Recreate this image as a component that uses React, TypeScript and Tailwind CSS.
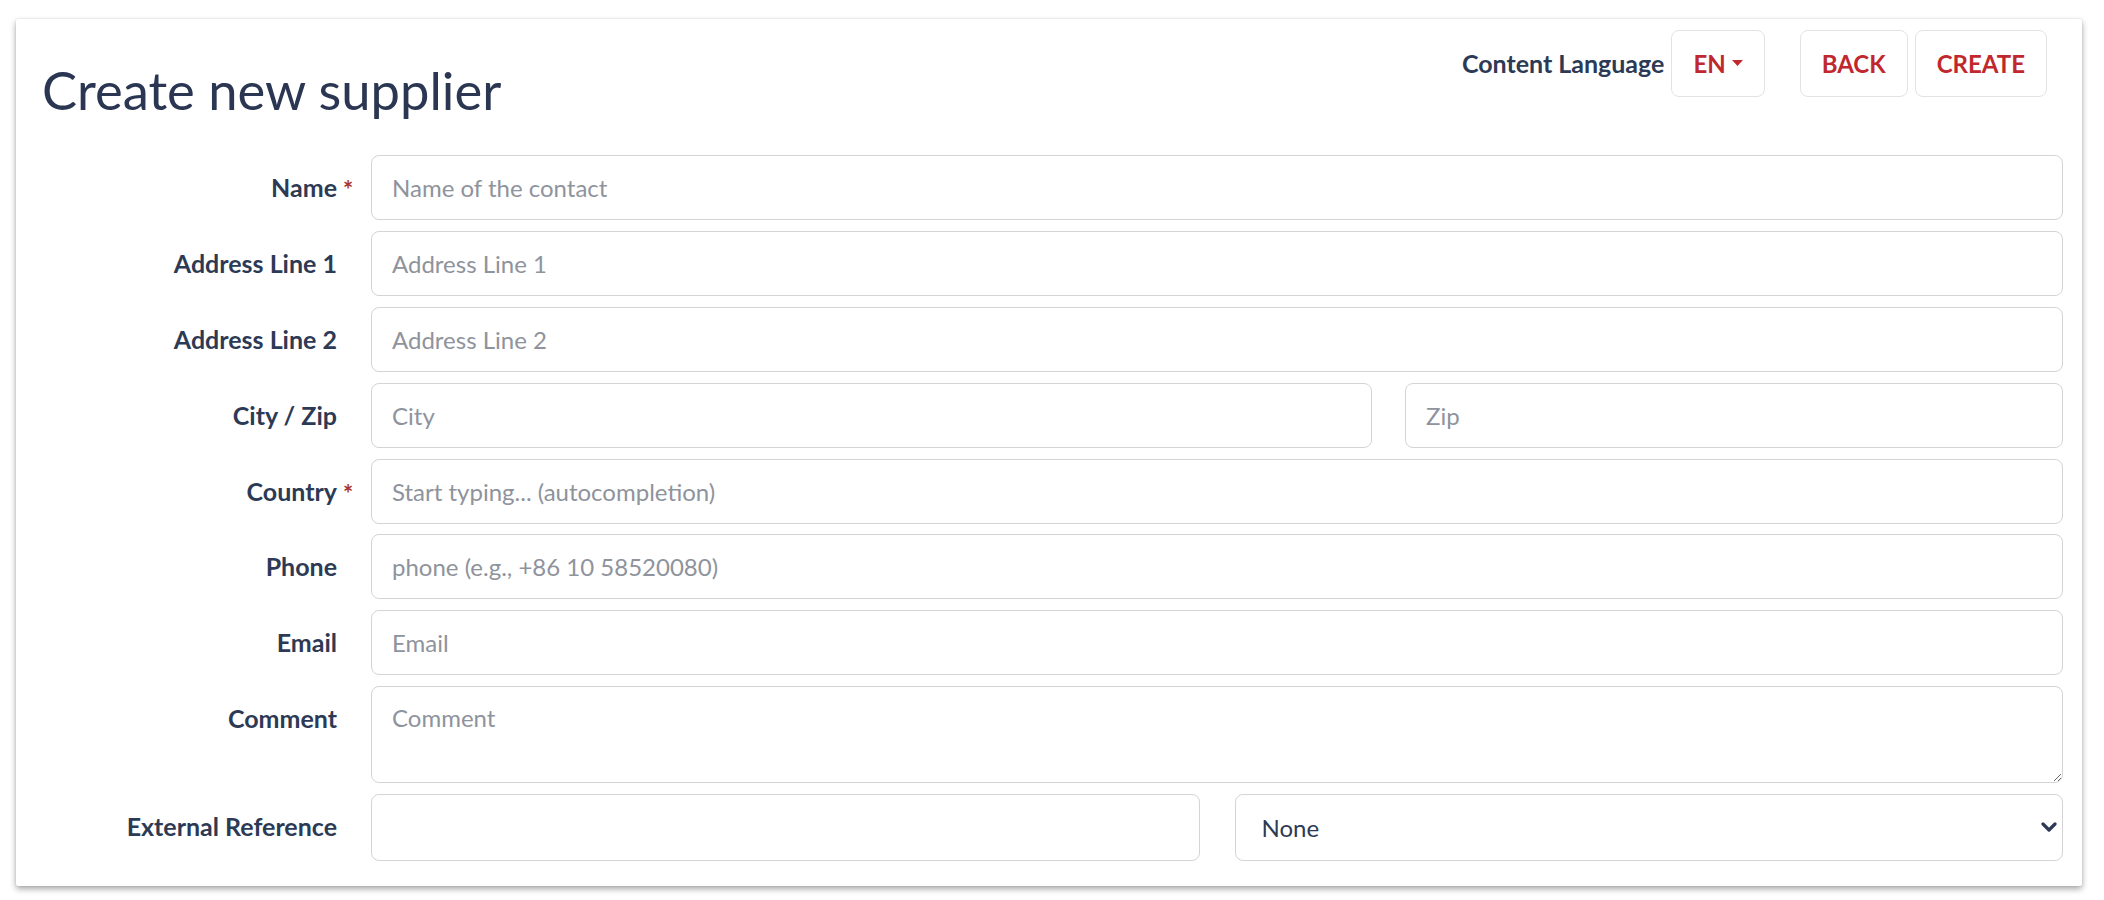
import React from "react";

function Row({
  label,
  required,
  children,
}: {
  label: string;
  required?: boolean;
  children: React.ReactNode;
}) {
  return (
    <div className="flex items-start">
      <div className="w-[355px] shrink-0 h-[65px] flex items-center justify-end pr-[34px]">
        <span className="relative text-[25px] font-bold text-[#2d3a55] leading-none">
          {label}
          {required && (
            <span className="absolute left-full top-[3px] ml-[6px] text-[24px] font-bold text-[#a8332e]">*</span>
          )}
        </span>
      </div>
      <div className="flex-1 min-w-0">{children}</div>
    </div>
  );
}

const inputCls =
  "block w-full h-[65px] rounded-[8px] border border-[#d4d4d6] bg-white px-[20px] text-[24px] text-[#2d3a55] placeholder:text-[#8e939c] outline-none";

function Input({ placeholder, tall }: { placeholder?: string; tall?: boolean }) {
  return (
    <input
      className={tall ? inputCls + " !h-[67px]" : inputCls}
      placeholder={placeholder}
    />
  );
}

export default function App() {
  return (
    <div className="min-h-[900px] bg-white font-['Lato','Noto_Sans',sans-serif] pt-[19px]">
      <div className="ml-[16px] mr-[22px] bg-white rounded-[2px] shadow-[0_3px_6px_rgba(0,0,0,0.35),0_0_2px_rgba(0,0,0,0.12)] pb-[25px] pr-[19px]">
        <div className="flex items-start justify-between">
          <h1 className="pl-[26px] pt-[39px] text-[52.5px] leading-[1.2] font-normal text-[#2b3752]">
            Create new supplier
          </h1>
          <div className="flex items-center pt-[11px] pr-[16px]">
            <span className="text-[25px] font-bold text-[#2d3a55] mr-[7px]">Content Language</span>
            <button className="h-[67px] px-[21px] rounded-[8px] border border-[#e3e3e5] bg-white flex items-center gap-[6px] text-[24px] font-bold text-[#c0282d]">
              EN
              <svg width="11" height="7" viewBox="0 0 11 7">
                <path d="M0 0 L11 0 L5.5 6 Z" fill="#c0282d" />
              </svg>
            </button>
            <button className="ml-[35px] h-[67px] px-[21px] rounded-[8px] border border-[#e3e3e5] bg-white text-[24px] font-bold text-[#c0282d]">
              BACK
            </button>
            <button className="ml-[7px] h-[67px] px-[21px] rounded-[8px] border border-[#e3e3e5] bg-white text-[24px] font-bold text-[#c0282d]">
              CREATE
            </button>
          </div>
        </div>

        <div className="mt-[34px] flex flex-col gap-[10.9px]">
          <Row label="Name" required>
            <Input placeholder="Name of the contact" />
          </Row>
          <Row label="Address Line 1">
            <Input placeholder="Address Line 1" />
          </Row>
          <Row label="Address Line 2">
            <Input placeholder="Address Line 2" />
          </Row>
          <Row label="City / Zip">
            <div className="grid grid-cols-[1001px_1fr] gap-[33px]">
              <Input placeholder="City" />
              <Input placeholder="Zip" />
            </div>
          </Row>
          <Row label="Country" required>
            <Input placeholder="Start typing... (autocompletion)" />
          </Row>
          <Row label="Phone">
            <Input placeholder="phone (e.g., +86 10 58520080)" />
          </Row>
          <Row label="Email">
            <Input placeholder="Email" />
          </Row>
          <Row label="Comment">
            <textarea
              className="block w-full h-[97px] rounded-[8px] border border-[#d4d4d6] bg-white px-[20px] py-[14px] text-[24px] leading-[1.4] text-[#2d3a55] placeholder:text-[#8e939c] outline-none"
              placeholder="Comment"
            />
          </Row>
          <Row label="External Reference">
            <div className="grid grid-cols-2 gap-[35px]">
              <Input tall />
              <div className="relative">
                <select className="block w-full h-[67px] appearance-none rounded-[8px] border border-[#d4d4d6] bg-white pl-[26px] pr-[50px] text-[24px] text-[#2d3a55] outline-none">
                  <option>None</option>
                </select>
                <svg
                  className="absolute right-[6px] top-[27px] pointer-events-none"
                  width="16"
                  height="12"
                  viewBox="0 0 16 12"
                >
                  <path d="M2 3 L8 9 L14 3" stroke="#2d3a55" strokeWidth="3.2" fill="none" strokeLinecap="round" strokeLinejoin="round" />
                </svg>
              </div>
            </div>
          </Row>
        </div>
      </div>
    </div>
  );
}
